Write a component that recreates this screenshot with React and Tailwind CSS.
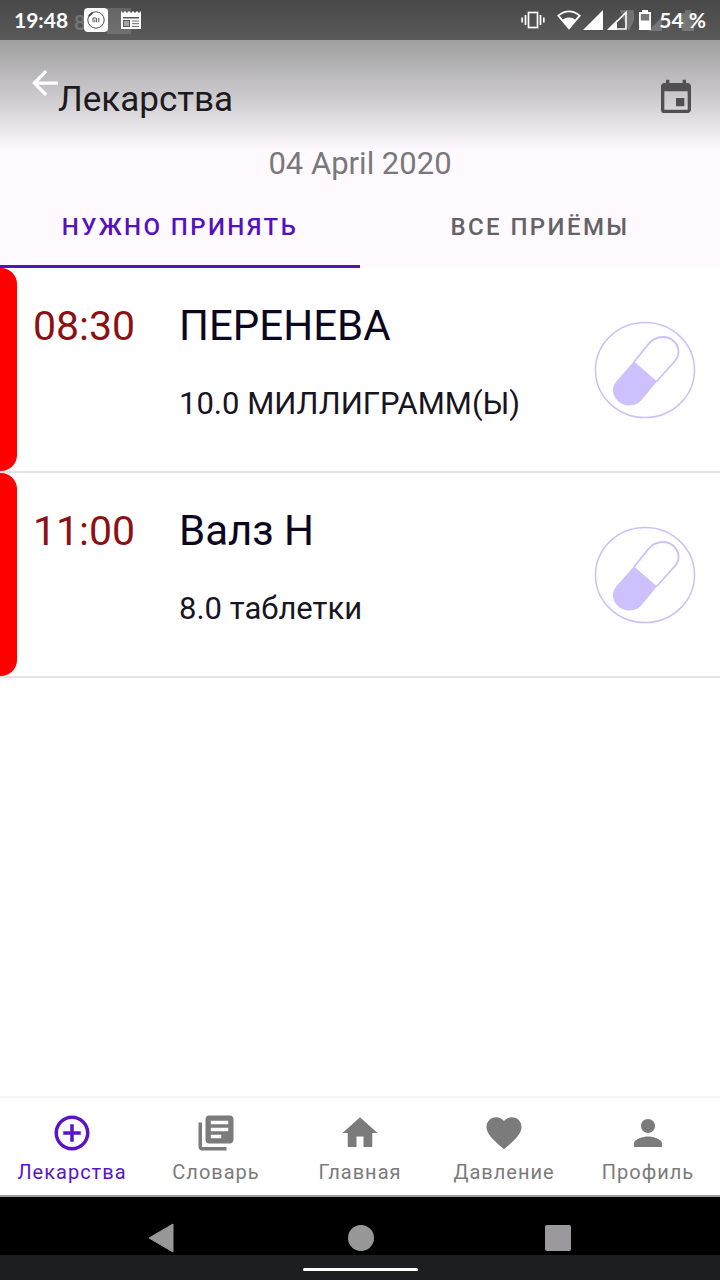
import { useState } from 'react';
import { MdAddCircleOutline, MdLibraryBooks, MdHome, MdFavorite, MdPerson, MdEvent } from 'react-icons/md';

const tabs = ['Нужно принять', 'Все приёмы'];

const medicines = [
  { time: '08:30', name: 'ПЕРЕНЕВА', dose: '10.0 МИЛЛИГРАММ(Ы)' },
  { time: '11:00', name: 'Валз Н', dose: '8.0 таблетки' },
];

const navItems = [
  { label: 'Лекарства', icon: MdAddCircleOutline },
  { label: 'Словарь', icon: MdLibraryBooks },
  { label: 'Главная', icon: MdHome },
  { label: 'Давление', icon: MdFavorite },
  { label: 'Профиль', icon: MdPerson },
];

function StatusBar() {
  return (
    <div className="relative flex h-10 items-center justify-between bg-linear-to-b from-[#484848] to-[#5a5a5a] px-3.5 font-['Lato',sans-serif] text-[21px] font-bold leading-6 text-white">
      {/* Faded indicators of the underlying bar */}
      <div aria-hidden="true" className="absolute inset-0">
        <span className="absolute left-[74px] top-2.5 opacity-20">8</span>
        <span className="absolute left-[107px] top-2 h-[26px] w-6 bg-white/15" />
        <svg className="absolute right-6 top-2 h-6 w-[76px] fill-white/20" viewBox="0 0 76 24">
          <path d="M0 2H14V12L9 23L4 13ZM28 23L42 9V23ZM62 5H65V2H71V5H74V23H62Z" />
        </svg>
      </div>

      <div className="relative flex items-center">
        <span>19:48</span>
        <svg className="ml-4 h-6 w-6" viewBox="0 0 24 24" fill="none">
          <rect width="24" height="24" rx="4" fill="#fff" />
          <circle cx="12" cy="12" r="8.2" stroke="#555" strokeWidth="1" />
          <path d="M4.8 8.2L8.6 4.6" stroke="#444" strokeWidth="1.8" />
          <path d="M9 14.2V10h2.6q1 0 1 1v3.2M10.9 11.6v2.6M14.8 10v4.2" stroke="#555" strokeWidth="1" />
        </svg>
        <svg className="ml-3 h-5 w-[22px]" viewBox="0 0 22 20" fill="none">
          <path d="M1 1l2 2 2-2 2 2 2-2 2 2 2-2 2 2 2-2 2 2 2-2V19H1Z" fill="#fff" />
          <path d="M3 7H19V8.5H3ZM3 10H10V17H3Z" fill="#575757" />
          <path d="M4 11H9V16H4Z" fill="#a5a5a5" />
          <path d="M12 11H19M12 13.7H19M12 16.400H19" stroke="#686868" strokeWidth="1" />
        </svg>
      </div>

      <div className="relative flex items-center">
        <svg className="h-5 w-6" viewBox="0 0 24 20" fill="none" stroke="#fff" strokeWidth="1.7">
          <rect x="7.5" y="2.5" width="9" height="15" />
          <path d="M4.5 5V15M1.2 7.5V12.5M19.5 5V15M22.8 7.5V12.5" />
        </svg>
        <svg className="ml-3 h-5 w-6" viewBox="0 0 24 20" fill="none">
          <path d="M1.3 5.600Q12-2.800 22.700 5.600L12 18.300Z" stroke="#fff" strokeWidth="1.8" />
          <path d="M5 10Q12 5.200 19 10L12 18.500Z" fill="#fff" />
        </svg>
        <svg className="ml-0.5 h-5 w-5" viewBox="0 0 20 20">
          <path d="M20 0V20H0Z" fill="#fff" />
        </svg>
        <svg className="ml-1 h-5 w-5" viewBox="0 0 20 20" fill="none">
          <path d="M19 2.400V19H2.400Z" stroke="#fff" strokeWidth="1.6" />
          <path d="M10 10V20H0Z" fill="#fff" />
        </svg>
        <svg className="ml-3 h-5 w-3" viewBox="0 0 12 20">
          <path d="M3 0H9V2H12V20H0V2H3Z" fill="#fff" />
          <path d="M1.800 4H10.200V10.500H1.800Z" fill="#777" />
        </svg>
        <span className="ml-2">54 %</span>
      </div>
    </div>
  );
}

function PillIcon() {
  return (
    <svg className="h-[98px] w-[102px] shrink-0" viewBox="0 0 102 98" fill="none" stroke="#cdc0f7">
      <ellipse cx="51" cy="49" rx="49.500" ry="47.500" strokeWidth="1.500" />
      <path
        d="M40 41L54 23.500C59 17 64 16 69 16C78 16 84.500 23 84.500 31C84.500 35 83 38 80 41L62.500 60.500"
        strokeWidth="1.800"
      />
      <path
        d="M40 41L62.500 60.500L47 79C43 83.500 38.500 84 34 84C26 83.500 19.500 77 19.500 69C19.500 65 21 62.500 24 59Z"
        fill="#cdc0fd"
        strokeWidth="1"
      />
    </svg>
  );
}

function MedicineRow({ time, name, dose }) {
  return (
    <li className="flex border-b-2 border-[#e4e2e7]">
      <span className="w-[17px] shrink-0 rounded-r-2xl bg-[#ff0000]" />
      <div className="flex flex-1 items-center py-8 pl-4 pr-6">
        <time className="w-[146px] shrink-0 self-start text-[41px] leading-[52px] text-[#8b1114]">{time}</time>
        <div className="flex-1">
          <h2 className="text-[42px] leading-[52px] text-[#0c0720]">{name}</h2>
          <p className="mt-8 mb-[15px] text-[31px] leading-10 text-[#17151f]">{dose}</p>
        </div>
        <PillIcon />
      </div>
    </li>
  );
}

export default function App() {
  const [activeTab, setActiveTab] = useState(0);
  const [activeNav, setActiveNav] = useState(0);

  return (
    <div className="flex min-h-screen flex-col bg-white font-['Roboto',sans-serif]">
      <StatusBar />

      <header className="bg-[#fefaff]">
        <div className="flex h-[110px] items-start bg-linear-to-b from-[#a0a0a0] via-[#cac8cb] to-[#fefaff] pl-8 pr-6">
          <button type="button" aria-label="Назад" className="mt-[30px]">
            <svg className="h-[26px] w-[26px] fill-white" viewBox="4 4 16 16">
              <path d="M20 11H7.830l5.590-5.590L12 4l-8 8 8 8 1.410-1.410L7.830 13H20v-2z" />
            </svg>
          </button>
          <h1 className="mt-10 flex-1 text-[35px] leading-10 text-[#1c1a1e]">Лекарства</h1>
          <button type="button" aria-label="Календарь" className="mt-[38px] text-[#504f52]">
            <MdEvent className="h-10 w-10" />
          </button>
        </div>
        <p className="-mt-1 text-center text-[31px] leading-9 text-[#7a787b]">04 April 2020</p>
        <div role="tablist" className="mt-1 flex">
          {tabs.map((tab, i) => (
            <button
              key={tab}
              type="button"
              role="tab"
              aria-selected={activeTab === i}
              onClick={() => setActiveTab(i)}
              className={`flex-1 border-b-3 pt-[23px] pb-5 text-2xl font-medium uppercase leading-9 tracking-widest ${
                activeTab === i ? 'border-[#5311c0] text-[#5311c0]' : 'border-transparent text-[#646265]'
              }`}
            >
              {tab}
            </button>
          ))}
        </div>
      </header>

      <main className="flex-1">
        <ul>
          {medicines.map((m) => (
            <MedicineRow key={m.time} {...m} />
          ))}
        </ul>
      </main>

      <nav className="flex border-t-2 border-b-2 border-t-[#f6f6f6] border-b-[#9a9a9a] pt-3.5 pb-[9px]">
        {navItems.map(({ label, icon: Icon }, i) => (
          <button
            key={label}
            type="button"
            onClick={() => setActiveNav(i)}
            className={`flex flex-1 basis-0 flex-col items-center gap-1 text-xl tracking-wider ${
              activeNav === i ? 'text-[#5a14c8]' : 'text-[#7b7b7b]'
            }`}
          >
            <Icon className="h-[42px] w-[42px]" />
            <span className="leading-7">{label}</span>
          </button>
        ))}
      </nav>

      {/* System navigation */}
      <div className="flex h-[58px] items-end justify-center gap-[171px] bg-black pb-0.5">
        <button type="button" aria-label="Назад">
          <svg className="h-[30px] w-7" viewBox="0 0 28 30">
            <path d="M24 1V29L0 15Z" fill="#989898" stroke="#989898" strokeLinejoin="round" />
          </svg>
        </button>
        <button type="button" aria-label="Домой" className="mb-0.5 h-[26px] w-[26px] rounded-full bg-[#989898]" />
        <button type="button" aria-label="Недавние" className="mb-0.5 h-[26px] w-[26px] rounded-xs bg-[#9b999d]" />
      </div>
      <div className="flex h-[25px] items-center justify-center bg-[#1d1e22] pt-1">
        <span className="h-[3px] w-[115px] rounded-full bg-white" />
      </div>
    </div>
  );
}
